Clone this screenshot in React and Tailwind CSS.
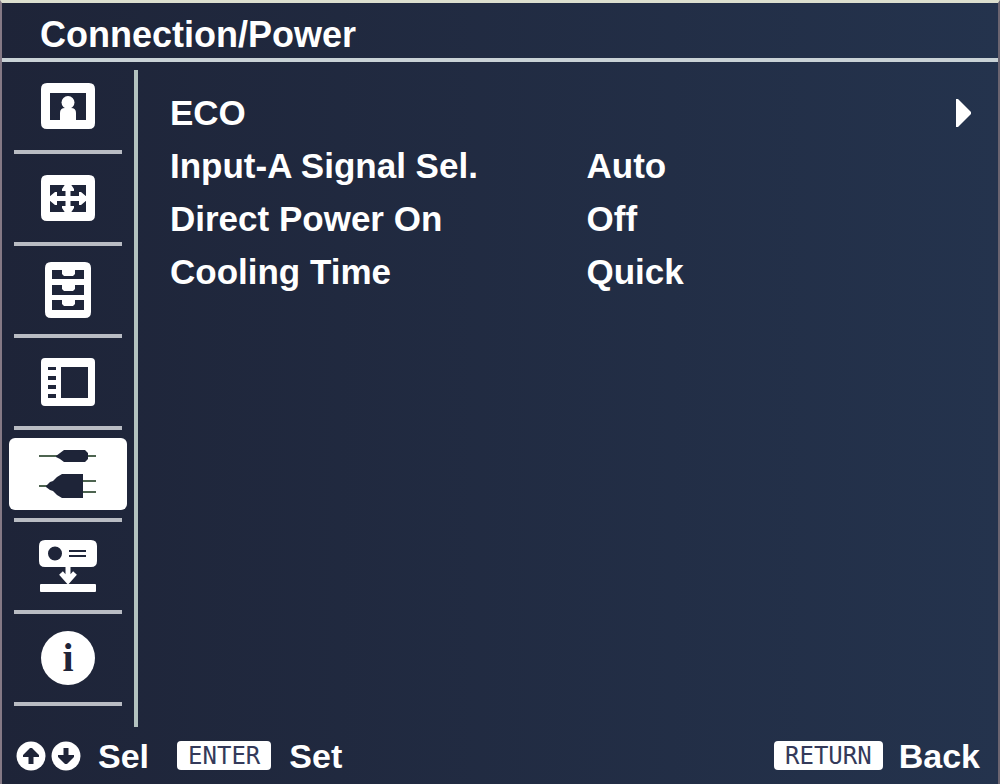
import React, { useState } from 'react';

const PictureIcon = () => (
  <svg width="54" height="46" viewBox="0 0 54 46" fill="currentColor" aria-hidden="true">
    <path fillRule="evenodd" d="M6 0H48Q54 0 54 6V40Q54 46 48 46H6Q0 46 0 40V6Q0 0 6 0ZM9 10V37H45V10Z" />
    <circle cx="27" cy="19.5" r="6.5" />
    <path d="M19 38V30Q19 25 24 25H30Q35 25 35 30V38Z" />
  </svg>
);

const ScreenIcon = () => (
  <svg width="54" height="46" viewBox="0 0 54 46" fill="currentColor" aria-hidden="true">
    <path fillRule="evenodd" d="M6 0H48Q54 0 54 6V40Q54 46 48 46H6Q0 46 0 40V6Q0 0 6 0ZM9 10V37H45V10Z" />
    <path d="M24.5 10H29.5V37H24.5ZM9 21H45V26H9Z" />
    <path d="M25 8H29L33 14V16H21V14ZM25 39H29L33 33V31H21V33Z" />
    <path d="M8 22L14 17H16V30H14L8 25ZM46 22L40 17H38V30H40L46 25Z" />
  </svg>
);

const SetupIcon = () => (
  <svg width="46" height="56" viewBox="0 0 46 56" fill="currentColor" aria-hidden="true">
    <path
      fillRule="evenodd"
      d="M6 0H40Q46 0 46 6V50Q46 56 40 56H6Q0 56 0 50V6Q0 0 6 0ZM7 8V17H39V8H30V12L28 14H19L17 12V8ZM7 23V33H39V23H30V27L28 29H19L17 27V23ZM7 38V48H39V38H30V42L28 44H19L17 42V38Z"
    />
  </svg>
);

const MenuIcon = () => (
  <svg width="54" height="48" viewBox="0 0 54 48" fill="currentColor" aria-hidden="true">
    <path
      fillRule="evenodd"
      d="M4 0H50Q54 0 54 4V44Q54 48 50 48H4Q0 48 0 44V4Q0 0 4 0ZM20 9V40H47V9ZM7 9V12H15V9ZM7 18V22H15V18ZM7 27V31H15V27ZM7 36V40H15V36Z"
    />
  </svg>
);

const PlugIcon = () => (
  <svg width="58" height="50" viewBox="0 0 58 50" fill="currentColor" aria-hidden="true">
    <path d="M0 7H57M0 37H10M44 32H57M44 43H57" stroke="#4d6450" strokeWidth="2" />
    <path d="M17 7L21 4L25 1H46L49 4V10L46 13H25L21 10L17 8Z" />
    <path d="M7 37L11 33L14 32L18 28L23 25H44V49H23L18 46L14 42L11 41L7 38Z" />
  </svg>
);

const InstallIcon = () => (
  <svg width="58" height="52" viewBox="0 0 58 52" fill="currentColor" aria-hidden="true">
    <path
      fillRule="evenodd"
      d="M6 0H52Q58 0 58 6V21Q58 27 52 27H6Q0 27 0 21V6Q0 0 6 0ZM16 6.5A7 7 0 1 0 16 20.5A7 7 0 1 0 16 6.5ZM30 10V12H47V10ZM30 15V17H47V15Z"
    />
    <path d="M29 27V41M22 33L29 41L36 33" fill="none" stroke="currentColor" strokeWidth="5" />
    <rect x="1" y="44" width="56" height="8" rx="1" />
  </svg>
);

const InfoIcon = () => (
  <span className="flex h-[54px] w-[54px] items-center justify-center rounded-full bg-white font-['Liberation_Serif',serif] text-[40px] leading-none font-bold text-[#1e2438]">
    i
  </span>
);

const ArrowIcon = ({ down }) => (
  <svg width="30" height="30" viewBox="0 0 30 30" className={down ? 'rotate-180' : ''} aria-hidden="true">
    <circle cx="15" cy="15" r="14.5" fill="#fff" />
    <path d="M14 7H16L23 14V16H17.5V23H12.5V16H7V14Z" fill="#1e2438" />
  </svg>
);

const pages = [
  { name: 'Picture', Icon: PictureIcon },
  { name: 'Screen', Icon: ScreenIcon },
  { name: 'Setup', Icon: SetupIcon },
  { name: 'Menu Settings', Icon: MenuIcon },
  { name: 'Connection/Power', Icon: PlugIcon },
  { name: 'Installation', Icon: InstallIcon },
  { name: 'Information', Icon: InfoIcon },
];

const settings = [
  { label: 'ECO', submenu: true },
  { label: 'Input-A Signal Sel.', value: 'Auto' },
  { label: 'Direct Power On', value: 'Off' },
  { label: 'Cooling Time', value: 'Quick' },
];

const SettingRow = ({ label, value, submenu }) => (
  <li>
    <button className="flex h-[53px] w-full items-center text-left whitespace-nowrap">
      <span className="w-[52%] shrink-0">{label}</span>
      <span className="flex-1">{value}</span>
      {submenu && (
        <svg width="16" height="28" viewBox="0 0 16 28" className="shrink-0" aria-hidden="true">
          <path d="M1 0H3L16 13V15L3 28H1Z" fill="#fff" />
        </svg>
      )}
    </button>
  </li>
);

const KeyCap = ({ children }) => (
  <kbd className="flex h-[29px] items-center rounded bg-white px-[11px] font-['DejaVu_Sans_Mono',monospace] text-[24px] leading-none font-normal text-[#343a5a]">
    {children}
  </kbd>
);

const App = () => {
  const [active, setActive] = useState('Connection/Power');

  return (
    <div className="flex min-h-screen flex-col border-t-[3px] border-r-2 border-l-2 border-t-[#dcdfcf] border-r-[#6b6470] border-l-[#857985] bg-linear-to-r from-[#1e2438] to-[#24334d] font-['Liberation_Sans',Arial,sans-serif] text-[34px] leading-none font-bold text-white">
      <header className="flex h-[59px] items-center border-b-4 border-[#c9d2d6] pt-2 pl-[38px]">
        <h1 className="text-[36px]">{active}</h1>
      </header>

      <div className="flex flex-1">
        <nav className="flex w-[132px] shrink-0 flex-col">
          {pages.map(({ name, Icon }) => (
            <div key={name} className="flex h-[92px] flex-col items-center">
              <div className="flex flex-1 items-center">
                <button
                  aria-label={name}
                  onClick={() => setActive(name)}
                  className={`flex h-[72px] w-[118px] items-center justify-center rounded-md ${
                    name === active ? 'bg-white text-[#1e2438]' : 'text-white'
                  }`}
                >
                  <Icon />
                </button>
              </div>
              <div className="h-1 w-[108px] bg-[#b9bcc3]" />
            </div>
          ))}
        </nav>

        <div className="mt-2 w-1 shrink-0 bg-[#b3c2bf]" />

        <main className="flex-1 pt-6 pr-[27px] pl-8 text-[35px] leading-none">
          <ul>
            {settings.map((item) => (
              <SettingRow key={item.label} {...item} />
            ))}
          </ul>
        </main>
      </div>

      <footer className="flex h-[57px] items-center justify-between pr-[18px] pl-[14px]">
        <div className="flex items-center">
          <button className="flex items-center gap-[5px]" aria-label="Select">
            <ArrowIcon />
            <ArrowIcon down />
            <span className="ml-3">Sel</span>
          </button>
          <button className="ml-7 flex items-center gap-[18px]">
            <KeyCap>ENTER</KeyCap>
            Set
          </button>
        </div>
        <button className="flex items-center gap-4">
          <KeyCap>RETURN</KeyCap>
          Back
        </button>
      </footer>
    </div>
  );
};

export default App;
